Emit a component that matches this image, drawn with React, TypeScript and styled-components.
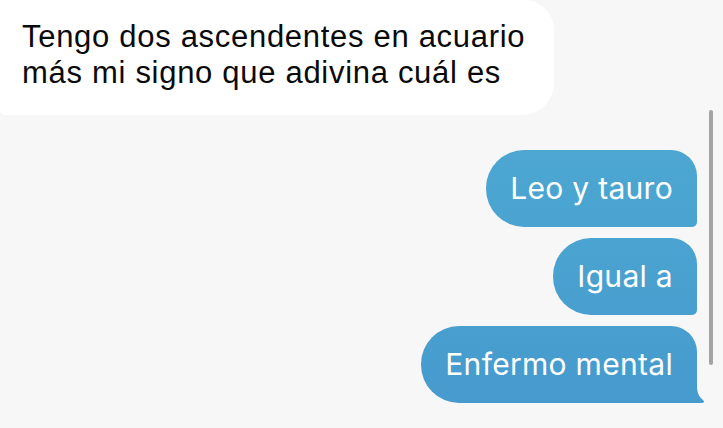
import React from "react";
import styled, { createGlobalStyle } from "styled-components";

const GlobalStyle = createGlobalStyle`
  html, body {
    margin: 0;
    padding: 0;
    background: #f7f7f7;
  }
  body {
    width: 723px;
    height: 428px;
    overflow: hidden;
  }
`;

export const Screen = styled.div`
  position: relative;
  width: 723px;
  height: 428px;
  background: #f7f7f7;
  display: flex;
  flex-direction: column;
  overflow: hidden;
`;

export const Incoming = styled.div`
  align-self: flex-start;
  width: 532px;
  padding: 19px 0 24px 22px;
  background: #ffffff;
  border-radius: 0 30px 32px 6px;
  color: #0a0a0a;
  font-family: "Liberation Sans", Arial, sans-serif;
  font-size: 31px;
  letter-spacing: 0.7px;
  line-height: 36px;
`;

export const Outgoing = styled.div`
  display: flex;
  flex-direction: column;
  align-items: flex-end;
  gap: 11px;
  padding: 35px 26px 0 0;
`;

export const Bubble = styled.div<{ $tail?: boolean }>`
  position: relative;
  height: 77px;
  box-sizing: border-box;
  padding: 0 24px 2px;
  display: flex;
  align-items: center;
  color: #ffffff;
  font-family: Inter, "Liberation Sans", Arial, sans-serif;
  font-size: 30px;
  font-weight: 400;
  letter-spacing: 0.3px;
  background: linear-gradient(180deg, #4fadd3 0px, #4aa2d0 260px, #4699ce 428px);
  background-attachment: fixed;
  border-radius: 38px 26px ${({ $tail }) => ($tail ? "0" : "5px")} 38px;

  ${({ $tail }) =>
    $tail &&
    `
    &::after {
      content: "";
      position: absolute;
      right: -8px;
      bottom: 0;
      width: 14px;
      height: 18px;
      background: inherit;
      background-attachment: fixed;
      clip-path: path("M0 0 L6 0 C6 8 8 12 12 15 C14 17 13 18 10 18 L0 18 Z");
    }
  `}
`;

export const Scrollbar = styled.div`
  position: absolute;
  right: 10px;
  top: 110px;
  width: 4px;
  height: 255px;
  border-radius: 2px;
  background: #a3a3a3;
`;

const messages = ["Leo y tauro", "Igual a", "Enfermo mental"];

const App = () => {
  return (
    <>
      <GlobalStyle />
      <Screen>
        <Incoming>
          Tengo dos ascendentes en acuario
          <br />
          más mi signo que adivina cuál es
        </Incoming>
        <Outgoing>
          {messages.map((m, i) => (
            <Bubble key={m} $tail={i === messages.length - 1}>
              {m}
            </Bubble>
          ))}
        </Outgoing>
        <Scrollbar />
      </Screen>
    </>
  );
};

export default App;
